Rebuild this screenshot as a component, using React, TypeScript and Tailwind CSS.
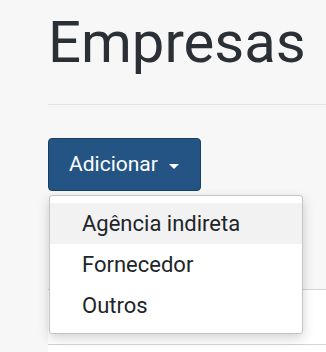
import { useState } from "react";

const items = ["Agência indireta", "Fornecedor", "Outros"];

export default function App() {
  const [active] = useState(0);

  return (
    <div className="min-h-[352px] overflow-hidden bg-[#f7f7f7] pl-[48px] pt-[8px] font-['Roboto',sans-serif] text-[#2a3036]">
      <h1 className="text-[58px] leading-[68px] font-normal">Empresas</h1>
      <hr className="mt-[28px] border-t border-[#e3e3e3]" />

      <div className="relative mt-[33px]">
        <button
          type="button"
          className="flex h-[53px] w-[153px] items-center rounded-[4px] border border-[#1b3f62] bg-[#245484] pl-[20px] text-[21px] text-white"
        >
          Adicionar
          <span className="ml-[11px] mt-[3px] h-0 w-0 border-x-[5px] border-t-[5px] border-x-transparent border-t-white" />
        </button>

        <ul className="absolute left-[1px] top-[57px] z-10 w-[254px] rounded-[3px] border border-[#c4c4c4] bg-white py-[7px] text-[22px] text-[#212529] shadow-[0_4px_12px_rgba(0,0,0,0.18)]">
          {items.map((item, index) => (
            <li
              key={item}
              className={`flex h-[41px] items-center pl-[32px] ${index === active ? "bg-[#f2f2f2]" : ""}`}
            >
              {item}
            </li>
          ))}
        </ul>

        <div className="mt-[98px] border-t border-[#d4d4d4] bg-white">
          <div className="h-[55px] border-b border-[#d4d4d4]" />
          <div className="h-[20px]" />
        </div>
      </div>
    </div>
  );
}
